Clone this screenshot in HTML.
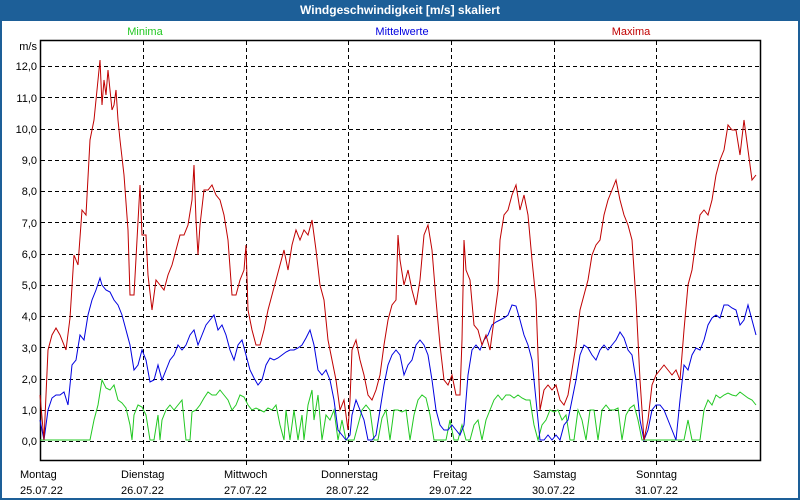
<!DOCTYPE html>
<html><head><meta charset="utf-8"><style>
html,body{margin:0;padding:0;background:#fff}
body{width:800px;height:500px;overflow:hidden;position:relative;font-family:"Liberation Sans",sans-serif}
.bar{position:absolute;left:0;top:0;width:800px;height:21px;background:#1d5f98;color:#fff;font-weight:bold;font-size:12px;text-align:center;line-height:20px}
.frame{position:absolute;left:0;top:21px;width:796px;height:477px;border:2px solid #1d5f98;border-top:none}
svg{position:absolute;left:0;top:0}
text{font-family:"Liberation Sans",sans-serif;font-size:11px}
</style></head><body>
<div class="bar">Windgeschwindigkeit [m/s] skaliert</div>
<div class="frame"></div>
<svg width="800" height="500">
<g stroke="#000" stroke-dasharray="4,3" stroke-width="1">
<line x1="41" y1="66.5" x2="759" y2="66.5"/><line x1="41" y1="97.5" x2="759" y2="97.5"/><line x1="41" y1="129.5" x2="759" y2="129.5"/><line x1="41" y1="160.5" x2="759" y2="160.5"/><line x1="41" y1="191.5" x2="759" y2="191.5"/><line x1="41" y1="222.5" x2="759" y2="222.5"/><line x1="41" y1="254.5" x2="759" y2="254.5"/><line x1="41" y1="285.5" x2="759" y2="285.5"/><line x1="41" y1="316.5" x2="759" y2="316.5"/><line x1="41" y1="347.5" x2="759" y2="347.5"/><line x1="41" y1="379.5" x2="759" y2="379.5"/><line x1="41" y1="410.5" x2="759" y2="410.5"/><line x1="41" y1="441.5" x2="759" y2="441.5"/>
<line x1="143.5" y1="41" x2="143.5" y2="466"/><line x1="246.5" y1="41" x2="246.5" y2="466"/><line x1="348.5" y1="41" x2="348.5" y2="466"/><line x1="451.5" y1="41" x2="451.5" y2="466"/><line x1="554.5" y1="41" x2="554.5" y2="466"/><line x1="656.5" y1="41" x2="656.5" y2="466"/>
</g>
<rect x="40.5" y="40.5" width="720" height="420" fill="none" stroke="#000" stroke-width="1.5"/>
<g font-size="11" text-anchor="end" fill="#000">
<text x="37" y="50">m/s</text>
<text x="37" y="70">12,0</text><text x="37" y="102">11,0</text><text x="37" y="133">10,0</text><text x="37" y="164">9,0</text><text x="37" y="195">8,0</text><text x="37" y="227">7,0</text><text x="37" y="258">6,0</text><text x="37" y="289">5,0</text><text x="37" y="320">4,0</text><text x="37" y="352">3,0</text><text x="37" y="383">2,0</text><text x="37" y="414">1,0</text><text x="37" y="445">0,0</text>
</g>
<text x="145" y="35" fill="#22c822" text-anchor="middle">Minima</text>
<text x="402" y="35" fill="#0000e0" text-anchor="middle">Mittelwerte</text>
<text x="631" y="35" fill="#c00000" text-anchor="middle">Maxima</text>
<g fill="#000">
<text x="20" y="478">Montag</text><text x="20" y="494">25.07.22</text>
<text x="121" y="478">Dienstag</text><text x="121" y="494">26.07.22</text>
<text x="224" y="478">Mittwoch</text><text x="224" y="494">27.07.22</text>
<text x="321" y="478">Donnerstag</text><text x="326" y="494">28.07.22</text>
<text x="433" y="478">Freitag</text><text x="429" y="494">29.07.22</text>
<text x="533" y="478">Samstag</text><text x="532" y="494">30.07.22</text>
<text x="636" y="478">Sonntag</text><text x="635" y="494">31.07.22</text>
</g>
<polyline fill="none" stroke="#22c822" stroke-width="1" points="40,440 90,440 94,420 98,405 102,380 106,388 110,390 114,385 118,400 122,403 126,408 130,425 132,440 134,415 138,405 142,407 146,415 150,440 154,440 158,415 160,440 162,420 166,410 170,405 174,410 178,405 182,400 184,420 186,440 190,440 192,412 196,410 200,405 204,398 208,392 212,395 216,395 220,390 224,395 228,400 232,410 236,405 240,395 244,397 248,405 252,410 256,408 260,410 264,412 268,408 272,410 276,405 280,425 284,440 286,410 290,440 294,410 298,440 302,415 304,440 308,405 312,390 314,420 318,395 322,440 326,415 330,420 334,410 338,440 342,420 346,440 354,440 358,425 362,410 366,405 370,410 374,440 378,440 382,418 386,410 390,440 394,410 398,410 402,412 406,410 410,440 414,415 418,400 422,395 426,398 430,415 434,440 446,440 450,420 454,440 458,440 462,425 466,440 470,440 474,425 478,420 482,440 486,420 490,410 494,400 498,395 502,400 506,395 510,395 514,398 518,395 522,398 526,400 530,400 534,425 538,440 542,425 546,420 550,410 554,412 558,410 562,420 566,415 570,440 574,440 578,410 582,420 586,440 590,410 594,410 598,440 602,410 606,405 610,410 614,410 618,408 622,440 626,415 630,408 634,405 638,420 642,440 684,440 688,420 692,440 700,440 704,410 708,400 712,405 716,395 720,398 724,395 728,393 732,395 736,396 740,392 744,395 748,398 752,400 756,405"/>
<polyline fill="none" stroke="#0000e0" stroke-width="1" points="40,420 44,440 48,410 52,398 56,395 60,395 64,392 68,405 72,365 76,360 80,335 84,340 88,315 92,300 96,290 100,278 102,285 106,290 110,292 114,300 118,305 122,315 126,330 130,345 134,370 138,365 142,350 146,360 150,382 154,380 158,365 162,380 166,370 170,360 174,355 178,345 182,350 186,345 190,335 194,330 198,345 202,335 206,325 210,320 214,315 218,330 222,325 226,335 230,350 234,360 238,345 242,340 246,355 250,370 254,378 258,385 262,380 266,365 270,358 274,360 278,358 282,355 286,352 290,350 294,350 298,348 302,345 306,338 310,330 314,345 318,370 322,375 326,370 330,380 334,400 338,430 342,435 346,440 350,435 352,415 356,400 360,410 364,420 368,440 372,440 376,435 380,410 384,385 388,365 392,355 396,350 400,355 404,375 408,365 412,360 416,345 420,340 424,345 428,355 432,380 436,410 440,425 444,430 448,430 452,425 456,430 460,435 464,425 468,375 472,350 476,345 480,350 484,340 488,335 492,325 496,322 500,320 504,318 508,315 512,305 516,306 520,320 524,335 528,345 532,360 536,400 540,440 544,440 548,435 552,440 556,435 560,440 564,425 568,420 572,400 576,380 580,355 584,345 588,348 592,355 596,360 600,350 604,345 608,350 612,345 616,340 620,332 624,338 628,350 632,355 636,380 640,420 644,440 648,430 652,410 656,405 660,405 664,410 668,420 672,430 676,440 680,400 684,365 688,370 692,355 696,348 700,350 704,340 708,325 712,318 716,315 720,318 724,305 728,305 732,308 736,310 740,325 744,320 748,305 752,320 756,335"/>
<polyline fill="none" stroke="#c00000" stroke-width="1" points="40,395 44,440 48,350 52,335 56,328 60,335 66,350 70,318 74,255 78,265 82,210 86,215 90,140 94,120 98,80 100,60 102,105 104,80 106,95 108,70 110,90 112,110 114,105 116,90 118,120 120,140 124,175 128,230 130,295 134,295 137,240 140,185 142,235 146,235 148,275 152,310 156,280 160,285 164,290 168,275 172,265 176,250 180,235 184,235 188,225 192,200 194,165 196,220 198,255 200,225 204,190 208,190 212,185 216,195 220,200 224,215 228,240 232,295 236,295 240,280 244,270 246,245 248,310 252,330 256,345 260,345 264,330 268,310 272,295 276,280 280,265 284,250 288,270 292,245 296,230 300,240 304,230 308,235 312,220 316,250 320,285 324,300 328,340 332,360 336,380 340,410 344,400 348,430 350,400 352,350 356,340 360,360 364,375 368,395 372,400 376,390 380,375 384,345 388,320 392,305 396,300 398,235 400,260 404,285 408,270 412,290 416,305 420,280 424,235 428,225 432,250 436,300 440,345 444,380 448,385 452,375 456,395 460,395 462,340 464,240 466,270 470,280 474,325 478,330 482,345 486,335 490,350 494,320 498,290 500,240 504,215 508,210 512,195 516,185 520,210 524,195 528,215 532,260 536,300 540,410 544,390 548,385 552,390 556,385 560,400 564,405 568,395 572,370 576,345 580,310 584,295 588,280 592,255 596,245 600,240 604,215 608,200 612,190 616,180 620,200 624,215 628,225 632,240 636,300 640,380 644,440 648,420 652,385 656,375 660,370 664,365 668,370 672,375 676,370 680,380 684,330 688,285 692,270 696,240 700,215 704,210 708,215 712,200 716,175 720,160 724,150 728,125 732,130 736,130 740,155 744,120 748,150 752,180 756,175"/>
</svg>
</body></html>
